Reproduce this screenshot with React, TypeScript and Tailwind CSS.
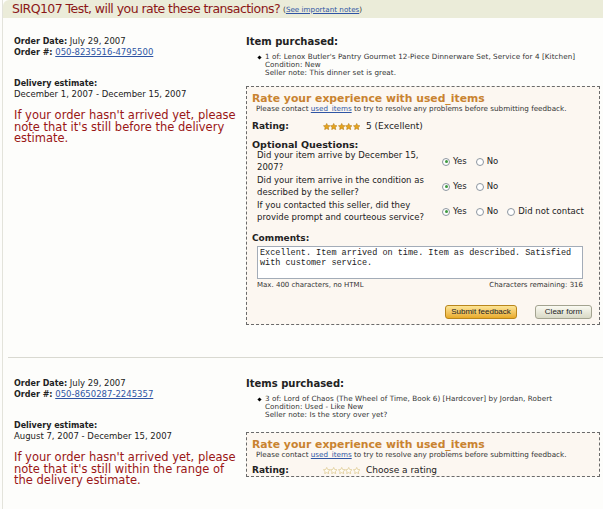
import React from 'react';

// Star used for the rating row
const Star: React.FC<{ filled: boolean }> = ({ filled }) => (
  <svg width="7.4" height="7.4" viewBox="0 0 24 24" className="block">
    <path
      d="M12 1.5l3.2 6.6 7.3 1-5.3 5.1 1.3 7.2L12 18l-6.5 3.4 1.3-7.2L1.5 9.1l7.3-1z"
      fill={filled ? '#e6a41c' : '#fffdf6'}
      stroke={filled ? '#b9801a' : '#d7c07a'}
      strokeWidth="2"
    />
  </svg>
);

const Stars: React.FC<{ count: number }> = ({ count }) => (
  <span className="flex">
    {[0, 1, 2, 3, 4].map((i) => (
      <Star key={i} filled={i < count} />
    ))}
  </span>
);

const Radio: React.FC<{ checked?: boolean; label: string }> = ({ checked, label }) => (
  <span className="flex items-center gap-[3px]">
    <span className="flex h-[8px] w-[8px] items-center justify-center rounded-full border border-[#8d96a0] bg-white">
      {checked && <span className="h-[3px] w-[3px] rounded-full bg-[#3f9a3f]" />}
    </span>
    <span>{label}</span>
  </span>
);

interface Question {
  text: string;
  options: string[];
}

const questions: Question[] = [
  { text: 'Did your item arrive by December 15, 2007?', options: ['Yes', 'No'] },
  { text: 'Did your item arrive in the condition as described by the seller?', options: ['Yes', 'No'] },
  { text: 'If you contacted this seller, did they provide prompt and courteous service?', options: ['Yes', 'No', 'Did not contact'] },
];

const ContactLine: React.FC = () => (
  <div className="pl-[4px] text-[7.2px] leading-[8px] text-[#333]">
    Please contact <a className="text-[#2f55a4] underline">used_items</a> to try to resolve any problems before
    submitting feedback.
  </div>
);

interface OrderProps {
  orderNo: string;
  delivery: string;
  note: string;
  itemsLabel: string;
  item: string;
  condition: string;
  sellerNote: string;
  boxGap: string;
  children: React.ReactNode;
}

const Order: React.FC<OrderProps> = ({ orderNo, delivery, note, itemsLabel, item, condition, sellerNote, boxGap, children }) => (
  <div className="grid grid-cols-[243px_354px]">
    {/* left column: order info */}
    <div className="pl-[11px] text-[8.5px] leading-[10px] text-[#222]">
      <div>
        <b className="text-[8px]">Order Date:</b> July 29, 2007
      </div>
      <div>
        <b className="text-[8px]">Order #:</b> <a className="text-[#2f55a4] underline">{orderNo}</a>
      </div>
      <div className="mt-[20px]">
        <b className="text-[8px]">Delivery estimate:</b>
      </div>
      <div>{delivery}</div>
      <div className="mt-[11px] w-[232px] text-[11.5px] leading-[11.7px] text-[#9a1616]">{note}</div>
    </div>

    {/* right column: items + feedback box */}
    <div>
      <div className="text-[10px] font-bold leading-[11px] text-[#222]">{itemsLabel}</div>
      <div className="mt-[6px] flex pl-[12px] text-[7.2px] leading-[8px] tracking-[0.07px] text-[#333]">
        <span className="mt-[3px] mr-[4px] h-[3px] w-[3px] shrink-0 rotate-45 bg-black" />
        <div>
          <div>{item}</div>
          <div>Condition: {condition}</div>
          <div>Seller note: {sellerNote}</div>
        </div>
      </div>
      <div className={`${boxGap} border border-dashed border-[#6a6a6a] bg-[#fcf7f1] pl-[5px] text-[#222]`}>
        <div className="pt-[6px] text-[10.8px] font-bold leading-[12px] text-[#c98330]">
          Rate your experience with used_items
        </div>
        <ContactLine />
        {children}
      </div>
    </div>
  </div>
);

const App: React.FC = () => {
  return (
    <div className="h-[509px] w-[603px] overflow-hidden bg-[#fdfdfb] font-['DejaVu_Sans',sans-serif]">
      <div className="ml-[2px] h-full border-l border-[#e3e3db]">
        <header className="flex h-[18px] items-center rounded-tl-[6px] bg-[#ebecd9] pl-[9px]">
          <h1 className="text-[12.5px] leading-[18px] tracking-[-0.55px] text-[#8c1717]">
            SIRQ107 Test, will you rate these transactions?
          </h1>
          <span className="ml-[3px] mt-[2px] text-[7.2px] text-[#333]">
            (<a className="text-[#2f55a4] underline">See important notes</a>)
          </span>
        </header>

        <div className="pt-[18px]">
          <Order
            orderNo="050-8235516-4795500"
            delivery="December 1, 2007 - December 15, 2007"
            note="If your order hasn't arrived yet, please note that it's still before the delivery estimate."
            itemsLabel="Item purchased:"
            item="1 of: Lenox Butler's Pantry Gourmet 12-Piece Dinnerware Set, Service for 4 [Kitchen]"
            condition="New"
            sellerNote="This dinner set is great."
            boxGap="mt-[9px]"
          >
            <div className="mt-[8px] flex h-[11px] items-center text-[9px]">
              <span className="w-[71px] font-bold">Rating:</span>
              <Stars count={5} />
              <span className="ml-[6px]">5 (Excellent)</span>
            </div>

            <div className="mt-[7px] text-[9.5px] font-bold leading-[11px]">Optional Questions:</div>
            <div className="flex flex-col gap-[2px] pl-[5px] text-[8.5px] leading-[11.5px]">
              {questions.map((q) => (
                <div key={q.text} className="flex items-center gap-[9px]">
                  <div className="w-[176px]">{q.text}</div>
                  <div className="flex items-center gap-[9px]">
                    {q.options.map((o, i) => (
                      <Radio key={o} label={o} checked={i === 0} />
                    ))}
                  </div>
                </div>
              ))}
            </div>

            <div className="mt-[10px] text-[9px] font-bold leading-[11px]">Comments:</div>
            <textarea
              readOnly
              value="Excellent. Item arrived on time. Item as described. Satisfied with customer service."
              className="mt-[2px] ml-[5px] block h-[33px] w-[326px] resize-none border border-[#a3acb8] bg-white px-[2px] py-[1px] font-['Liberation_Mono',monospace] text-[8.5px] leading-[10px] text-[#222] outline-none"
            />
            <div className="ml-[5px] mt-[2px] flex w-[326px] justify-between text-[7px] leading-[8px] text-[#333]">
              <span>Max. 400 characters, no HTML</span>
              <span>Characters remaining: 316</span>
            </div>

            <div className="mt-[16px] flex justify-end gap-[18px] pr-[7px] pb-[5px] font-['Liberation_Sans',sans-serif] text-[8px] text-[#222]">
              <button className="h-[14px] w-[72px] rounded-[3px] border border-[#b9861d] bg-linear-to-b from-[#fce595] to-[#e9ab24] leading-[12px]">
                Submit feedback
              </button>
              <button className="h-[14px] w-[57px] rounded-[3px] border border-[#a3a390] bg-linear-to-b from-[#fafaf2] to-[#d9d9c6] leading-[12px]">
                Clear form
              </button>
            </div>
          </Order>
        </div>

        <div className="ml-[5px] mt-[32px] h-px bg-[#d9d9d1]" />

        <div className="pt-[20px]">
          <Order
            orderNo="050-8650287-2245357"
            delivery="August 7, 2007 - December 15, 2007"
            note="If your order hasn't arrived yet, please note that it's still within the range of the delivery estimate."
            itemsLabel="Items purchased:"
            item="3 of: Lord of Chaos (The Wheel of Time, Book 6) [Hardcover] by Jordan, Robert"
            condition="Used - Like New"
            sellerNote="Is the story over yet?"
            boxGap="mt-[13px]"
          >
            <div className="mt-[6px] flex h-[11px] items-center text-[9px]">
              <span className="w-[71px] font-bold">Rating:</span>
              <Stars count={0} />
              <span className="ml-[6px]">Choose a rating</span>
            </div>
          </Order>
        </div>
      </div>
    </div>
  );
};

export default App;
